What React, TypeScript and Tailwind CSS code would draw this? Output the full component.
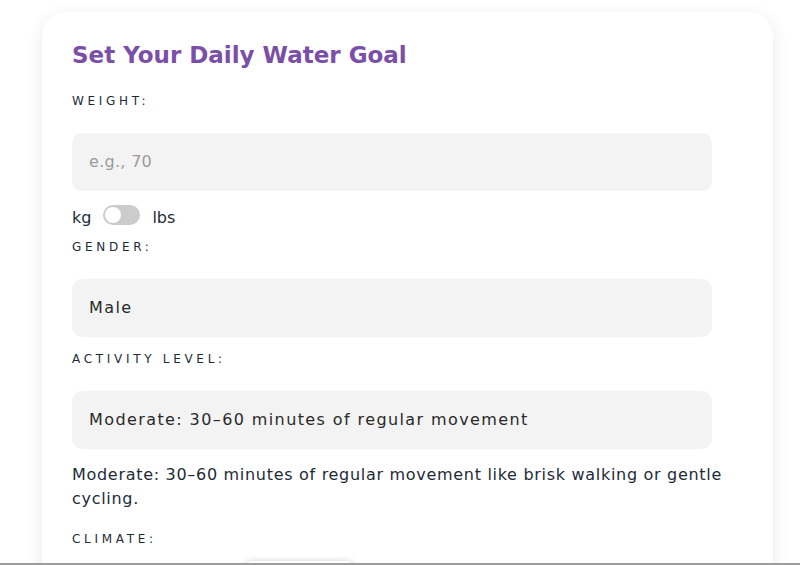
import React, { useState } from 'react';

function Label({ children, className = '' }: { children: React.ReactNode; className?: string }) {
  return (
    <div className={`text-[12px] leading-[18px] tracking-[3.7px] uppercase text-[#1d2b38] ${className}`}>
      {children}
    </div>
  );
}

function Field({ value, placeholder }: { value?: string; placeholder?: string }) {
  return (
    <div className="w-[640px] h-[58px] rounded-[10px] bg-[#f3f3f3] px-[17px] flex items-center text-[16px]">
      {value ? (
        <span className="text-[#2a2a2a] tracking-[1.4px]">{value}</span>
      ) : (
        <span className="text-[#9b9b9b] tracking-[0.3px]">{placeholder}</span>
      )}
    </div>
  );
}

export default function App() {
  const [lbs, setLbs] = useState(false);

  return (
    <div className="min-h-[565px] bg-white pt-[12px] pl-[42px] overflow-hidden font-['DejaVu_Sans','Noto_Sans',sans-serif]">
      <div className="w-[731px] rounded-[24px] bg-white shadow-[0_4px_18px_rgba(0,0,0,0.09)] pt-[27px] px-[30px] pb-[40px]">
        <h2 className="text-[23px] leading-[32px] font-bold text-[#7b4ea7]">
          Set Your Daily Water Goal
        </h2>

        <Label className="mt-[21px]">Weight:</Label>
        <div className="mt-[23px]">
          <Field placeholder="e.g., 70" />
        </div>
        <div className="mt-[16px] flex items-center gap-[12px] text-[16px] leading-[22px] text-[#1d2b38]">
          <span>kg</span>
          <button
            onClick={() => setLbs(!lbs)}
            className="relative w-[37px] h-[20px] rounded-full bg-[#cccccc] -mt-[6px]"
          >
            <span
              className={`absolute top-[2px] w-[16px] h-[16px] rounded-full bg-white ${lbs ? 'left-[19px]' : 'left-[2px]'}`}
            />
          </button>
          <span>lbs</span>
        </div>

        <Label className="mt-[9px]">Gender:</Label>
        <div className="mt-[23px]">
          <Field value="Male" />
        </div>

        <Label className="mt-[13px]">Activity Level:</Label>
        <div className="mt-[23px]">
          <Field value="Moderate: 30–60 minutes of regular movement" />
        </div>

        <p className="mt-[14px] text-[16px] leading-[24px] tracking-[0.7px] text-[#1d2b38]">
          Moderate: 30–60 minutes of regular movement like brisk walking or gentle cycling.
        </p>

        <Label className="mt-[19px]">Climate:</Label>
        <div className="mt-[13px] flex gap-[12px]">
          <div className="w-[159px] h-[40px] rounded-[10px] bg-white" />
          <div className="w-[113px] h-[40px] rounded-[10px] bg-white shadow-[0_0_6px_rgba(0,0,0,0.18)]" />
        </div>
      </div>
      <div className="fixed left-0 right-0 bottom-0 h-[2px] bg-[#9c9c9c]" />
    </div>
  );
}
